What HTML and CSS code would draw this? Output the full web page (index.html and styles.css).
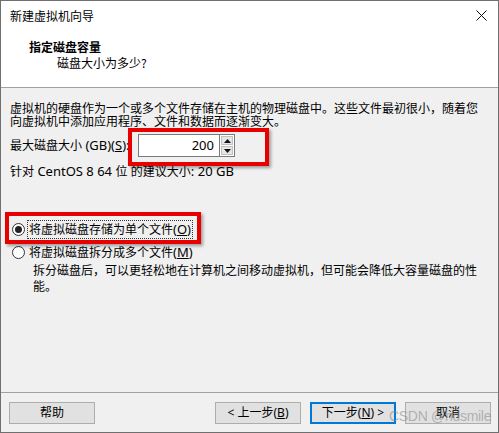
FILE: index.html
```html
<!DOCTYPE html>
<html lang="zh-CN">
<head>
<meta charset="utf-8">
<title>新建虚拟机向导</title>
<link rel="stylesheet" href="styles.css">
</head>
<body>
<div class="window">
  <div class="titlebar">
    <span class="title">新建虚拟机向导</span>
    <svg class="close" width="11" height="11" viewBox="0 0 11 11"><path d="M0.5 0.5 L10.5 10.5 M10.5 0.5 L0.5 10.5" stroke="#111" stroke-width="1" fill="none"/></svg>
  </div>
  <div class="header">
    <div class="h-title">指定磁盘容量</div>
    <div class="h-sub">磁盘大小为多少?</div>
  </div>
  <div class="content">
    <p class="intro">虚拟机的硬盘作为一个或多个文件存储在主机的物理磁盘中。这些文件最初很小，随着您<br>向虚拟机中添加应用程序、文件和数据而逐渐变大。</p>
    <div class="size-row">
      <span class="label">最大磁盘大小<span class="lat"> (GB)(<u>S</u>):</span></span>
      <div class="spin">
        <div class="spin-input">200</div>
        <div class="spin-btns">
          <div class="spin-btn"><svg width="7" height="4" viewBox="0 0 7 4"><path d="M3.5 0 L7 4 L0 4 Z" fill="#111"/></svg></div>
          <div class="spin-btn"><svg width="7" height="4" viewBox="0 0 7 4"><path d="M0 0 L7 0 L3.5 4 Z" fill="#111"/></svg></div>
        </div>
      </div>
    </div>
    <div class="recommend">针对<span class="lat"> CentOS 8 64 </span>位<span class="lat"> </span>的建议大小<span class="lat">: 20 GB</span></div>
    <div class="radio-row first">
      <span class="radio checked"></span>
      <span class="radio-label focus">将虚拟磁盘存储为单个文件<span class="lat">(<u>O</u>)</span></span>
    </div>
    <div class="radio-row second">
      <span class="radio"></span>
      <span class="radio-label">将虚拟磁盘拆分成多个文件<span class="lat">(<u>M</u>)</span></span>
    </div>
    <p class="note">拆分磁盘后，可以更轻松地在计算机之间移动虚拟机，但可能会降低大容量磁盘的性<br>能。</p>
  </div>
  <div class="footer">
    <button class="btn">帮助</button>
    <div class="spacer"></div>
    <button class="btn">&lt; 上一步(<u>B</u>)</button>
    <button class="btn primary">下一步(<u>N</u>) &gt;</button>
    <button class="btn">取消</button>
  </div>
  <div class="mark mark-size"></div>
  <div class="mark mark-radio"></div>
  <div class="watermark">CSDN @hdsmile</div>
</div>
</body>
</html>
```
FILE: styles.css
```css
html, body {
  margin: 0;
  padding: 0;
  background: #f0f0f0;
}
body {
  font-family: "Noto Sans", "Noto Sans CJK SC", sans-serif;
  font-size: 12px;
  color: #000;
}
.window {
  position: relative;
  box-sizing: border-box;
  width: 499px;
  height: 433px;
  border: 1px solid #6f6f6f;
  display: flex;
  flex-direction: column;
  background: #f0f0f0;
  overflow: hidden;
}
.titlebar {
  height: 29px;
  flex: none;
  background: #fff;
  display: flex;
  align-items: center;
  padding: 0 10px 0 9px;
}
.title {
  flex: 1;
  line-height: 16px;
  font-family: "Noto Sans CJK SC", sans-serif;
}
.close {
  display: block;
  margin-right: 1px;
}
.header {
  flex: none;
  background: #fff;
  border-bottom: 1px solid #a0a0a0;
  padding: 9px 0 0 28px;
  box-sizing: border-box;
  height: 58px;
  font-family: "Noto Sans CJK SC", sans-serif;
}
.h-title {
  font-weight: bold;
  line-height: 16px;
}
.h-sub {
  line-height: 16px;
  padding-left: 28px;
}
.content {
  flex: 1;
  padding: 14px 10px 0 9px;
}
.lat {
  font-size: 13px;
}
.intro {
  margin: 0;
  line-height: 13px;
  white-space: nowrap;
}
.size-row {
  margin-top: 6px;
  display: flex;
  align-items: center;
  height: 23px;
}
.label {
  width: 128px;
  line-height: 16px;
  white-space: nowrap;
}
.spin {
  display: flex;
  height: 23px;
}
.spin-input {
  box-sizing: border-box;
  width: 81px;
  height: 23px;
  background: #fff;
  border: 1px solid #7a7a7a;
  border-right: none;
  text-align: right;
  padding-right: 5px;
  line-height: 21px;
  font-size: 13px;
}
.spin-btns {
  box-sizing: border-box;
  width: 16px;
  height: 23px;
  border: 1px solid #7a7a7a;
  display: flex;
  flex-direction: column;
  padding: 1px;
  gap: 1px;
  background: #fff;
}
.spin-btn {
  flex: 1;
  background: #e5e5e5;
  border: 1px solid #c0c0c0;
  display: flex;
  align-items: center;
  justify-content: center;
}
.spin-btn svg {
  display: block;
}
.recommend {
  margin-top: 8px;
  line-height: 13px;
  height: 13px;
  white-space: nowrap;
}
.radio-row {
  display: flex;
  align-items: center;
  height: 18px;
}
.radio-row.first {
  margin-top: 42px;
}
.radio-row.second {
  margin-top: 5px;
}
.radio {
  box-sizing: border-box;
  width: 13px;
  height: 13px;
  margin-left: 2px;
  margin-right: 3px;
  border: 1px solid #333;
  border-radius: 50%;
  background: #fff;
  display: flex;
  align-items: center;
  justify-content: center;
}
.radio.checked::after {
  content: "";
  width: 7px;
  height: 7px;
  border-radius: 50%;
  background: #222;
}
.radio-label {
  line-height: 16px;
  padding: 0 1px;
  border: 1px solid transparent;
  margin-left: -1px;
  white-space: nowrap;
}
.radio-label.focus {
  border: 1px dotted #333;
}
.note {
  margin: 2px 0 0 23px;
  line-height: 16px;
  white-space: nowrap;
}
.footer {
  flex: none;
  border-top: 1px solid #a0a0a0;
  display: flex;
  align-items: flex-start;
  padding: 9px 7px 0 8px;
  box-sizing: border-box;
  height: 40px;
  gap: 9px;
}
.spacer {
  flex: 1;
}
.btn {
  box-sizing: border-box;
  width: 86px;
  height: 22px;
  margin: 0;
  padding: 0;
  background: #e1e1e1;
  border: 1px solid #adadad;
  font-family: "Noto Sans", "Noto Sans CJK SC", sans-serif;
  font-size: 12px;
  color: #000;
  line-height: 18px;
}
.btn.primary {
  border: 2px solid #0078d7;
  line-height: 16px;
}
.mark {
  position: absolute;
  box-sizing: border-box;
  border: 4px solid #e60000;
  box-shadow: 2px 2px 3px rgba(0, 0, 0, 0.35);
}
.mark-size {
  left: 127px;
  top: 127px;
  width: 141px;
  height: 38px;
}
.mark-radio {
  left: 4px;
  top: 211px;
  width: 196px;
  height: 32px;
}
.watermark {
  position: absolute;
  left: 388px;
  top: 406px;
  white-space: nowrap;
  font-family: "Liberation Sans", sans-serif;
  font-size: 14px;
  letter-spacing: -0.3px;
  color: rgba(140, 140, 140, 0.6);
  line-height: 18px;
}
```
